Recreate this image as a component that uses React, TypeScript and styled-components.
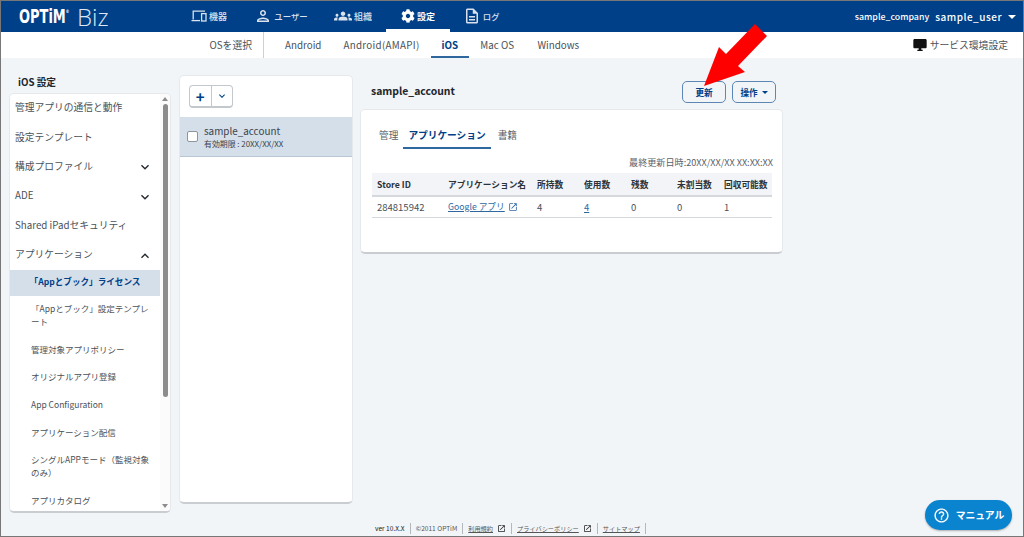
import React from "react";
import styled, { createGlobalStyle } from "styled-components";
import { FaCog } from "react-icons/fa";
import { MdDesktopWindows, MdOpenInNew, MdOutlineDescription, MdOutlineHelpOutline, MdOutlinePerson, MdGroups, MdExpandMore, MdExpandLess } from "react-icons/md";

const FONT = `"Noto Sans CJK JP", "Noto Sans", sans-serif`;
const NAVY = "#004088";

const Global = createGlobalStyle`
  html, body { margin: 0; padding: 0; height: 100%; overflow: hidden; }
  body { font-family: ${FONT}; color: #3c434a; background: #f2f5f8; }
  * { box-sizing: border-box; }
`;

const Page = styled.div`
  position: relative;
  width: 1024px;
  height: 537px;
  border: 1px solid #777;
  display: flex;
  flex-direction: column;
  overflow: hidden;
  background: #f2f5f8;
`;

const Header = styled.header`
  height: 31px;
  background: ${NAVY};
  display: flex;
  align-items: stretch;
  color: #fff;
  flex: none;
`;
const Logo = styled.div`
  width: 175px;
  padding-left: 18px;
  display: flex;
  align-items: center;
  gap: 8px;
`;
const LogoMark = styled.span`
  display: inline-block;
  width: 50px;
  white-space: nowrap;
  font-family: "DejaVu Sans Condensed", "DejaVu Sans", sans-serif;
  font-weight: 700;
  font-size: 19px;
  line-height: 1;
  transform: scaleX(0.76);
  transform-origin: left center;
`;
const LogoReg = styled.sup`
  font-size: 5px;
  vertical-align: 10px;
  line-height: 0;
`;
const LogoBiz = styled.span`
  font-family: "Open Sans", sans-serif;
  font-weight: 300;
  font-size: 24px;
  line-height: 1;
  color: #dfe8f2;
`;
const MainNav = styled.nav`
  display: flex;
  flex: 1;
`;
const NavItem = styled.a<{ $w: number; $active?: boolean; $fs?: number }>`
  position: relative;
  width: ${(p) => p.$w}px;
  display: flex;
  align-items: center;
  justify-content: center;
  gap: 2px;
  font-size: ${(p) => p.$fs ?? 9}px;
  font-weight: ${(p) => (p.$active ? 700 : 500)};
  color: #fff;
  opacity: ${(p) => (p.$active ? 1 : 0.85)};
  padding-bottom: 1px;
  svg { flex: none; }
  &::after {
    content: "";
    display: ${(p) => (p.$active ? "block" : "none")};
    position: absolute;
    left: 0;
    right: 0;
    bottom: 0;
    height: 3px;
    background: #fff;
  }
`;
const UserBox = styled.div`
  display: flex;
  align-items: center;
  gap: 6px;
  padding-right: 7px;
  font-weight: 500;
`;
const Company = styled.span`
  font-size: 8.8px;
`;
const UserName = styled.span`
  font-size: 10px;
  letter-spacing: 0.5px;
`;
const Caret = styled.i<{ $color?: string; $size?: number }>`
  display: inline-block;
  width: 0;
  height: 0;
  border-left: ${(p) => p.$size ?? 4}px solid transparent;
  border-right: ${(p) => p.$size ?? 4}px solid transparent;
  border-top: ${(p) => p.$size ?? 4}px solid ${(p) => p.$color ?? "#fff"};
`;

const SubNav = styled.div`
  height: 26px;
  background: #fff;
  display: flex;
  align-items: stretch;
  font-size: 9.8px;
  flex: none;
`;
const OsLabel = styled.div`
  width: 263px;
  padding-right: 11px;
  display: flex;
  align-items: center;
  justify-content: flex-end;
  border-right: 1px solid #ccd0d4;
  color: #4a5158;
`;
const OsTabs = styled.div`
  display: flex;
  padding-left: 10px;
`;
const OsTab = styled.a<{ $active?: boolean; $ls?: number }>`
  padding: 0 11px;
  display: flex;
  align-items: center;
  color: ${(p) => (p.$active ? NAVY : "#4a5158")};
  font-weight: ${(p) => (p.$active ? 700 : 400)};
  letter-spacing: ${(p) => p.$ls ?? 0}px;
  border-bottom: 2px solid ${(p) => (p.$active ? "#2f689f" : "transparent")};
  border-top: 2px solid transparent;
  &:last-child { margin-left: 1.5px; }
`;
const EnvLink = styled.div`
  margin-left: auto;
  padding-right: 15px;
  display: flex;
  align-items: center;
  gap: 2px;
  color: #4a5158;
  svg { color: #111; }
`;

const Main = styled.main`
  flex: 1;
  min-height: 0;
  display: flex;
  align-items: flex-start;
  padding: 16px 0 0 8px;
`;
const Side = styled.aside`
  width: 162px;
  margin-right: 8px;
  flex: none;
`;
const SideTitle = styled.h2`
  margin: 1px 0 4px 9px;
  font-size: 9.7px;
  font-weight: 700;
  line-height: 14px;
  color: #20262c;
`;
const SideCard = styled.div`
  height: 420px;
  background: #fff;
  border-radius: 5px;
  border: 1px solid #e6e9ec;
  border-bottom: 2px solid #c9cdd1;
  display: flex;
  overflow: hidden;
`;
const SideList = styled.div`
  flex: 1;
  min-width: 0;
  overflow: hidden;
`;
const TopItem = styled.div`
  height: 29.4px;
  padding: 0 7px 3px 5px;
  display: flex;
  align-items: center;
  justify-content: space-between;
  font-size: 9.75px;
  color: #4a5158;
  svg { color: #22282e; flex: none; margin-top: 3px; }
`;
const SubItem = styled.div<{ $active?: boolean }>`
  padding: ${(p) => (p.$active ? "5px 10px 8px 10px" : "5.5px 7px 9.2px 21px")};
  font-size: ${(p) => (p.$active ? 8.6 : 8.5)}px;
  line-height: 13px;
  color: ${(p) => (p.$active ? NAVY : "#4a5158")};
  background: ${(p) => (p.$active ? "#d5dfea" : "transparent")};
  font-weight: ${(p) => (p.$active ? 700 : 400)};
  text-align: ${(p) => (p.$active ? "center" : "left")};
`;
const ScrollTrack = styled.div`
  width: 10px;
  flex: none;
  background: #fbfbfb;
  display: flex;
  flex-direction: column;
  align-items: center;
  padding: 3px 0 3px;
`;
const ScrollThumb = styled.div`
  width: 5px;
  height: 293px;
  margin-top: 3px;
  background: #8c8c8c;
  border-radius: 3px;
`;
const ScrollUp = styled.i`
  width: 0;
  height: 0;
  border-left: 3px solid transparent;
  border-right: 3px solid transparent;
  border-bottom: 4px solid #8c8c8c;
`;
const ScrollDown = styled.i`
  width: 0;
  height: 0;
  margin-top: auto;
  border-left: 3px solid transparent;
  border-right: 3px solid transparent;
  border-top: 4px solid #8c8c8c;
`;

const ListPanel = styled.section`
  width: 174px;
  height: 429px;
  flex: none;
  margin: 1px 7px 0 0;
  background: #fff;
  border-radius: 5px;
  border: 1px solid #e6e9ec;
  border-bottom: 2px solid #c9cdd1;
`;
const ListToolbar = styled.div`
  height: 41px;
  padding: 9px 0 0 9px;
`;
const BtnGroup = styled.div`
  width: 44px;
  height: 23px;
  display: flex;
  border: 1px solid #c3c8cd;
  border-bottom-width: 2px;
  border-radius: 4px;
  color: ${NAVY};
`;
const BtnCell = styled.div`
  flex: 1;
  display: flex;
  align-items: center;
  justify-content: center;
  & + & { border-left: 1px solid #c3c8cd; }
`;
const PlusText = styled.span`
  font-size: 15px;
  font-weight: 700;
  line-height: 1;
`;
const AccountRow = styled.div`
  height: 40px;
  background: #d5dfea;
  border-bottom: 1px solid #b9c6d4;
  display: flex;
  align-items: center;
  padding-left: 7px;
  gap: 6px;
`;
const Check = styled.span`
  width: 11px;
  height: 11px;
  background: #fff;
  border: 1px solid #8d949b;
  border-radius: 2px;
  flex: none;
`;
const AccountName = styled.div`
  font-size: 9.9px;
  line-height: 13px;
  color: #3c434a;
`;
const AccountExp = styled.div`
  font-size: 7.9px;
  line-height: 11px;
  color: #3c434a;
`;

const Detail = styled.section`
  width: 423px;
  flex: none;
  margin-top: 1px;
`;
const DetailHead = styled.div`
  height: 34px;
  padding: 6px 7px 0 11px;
  display: flex;
  align-items: flex-start;
`;
const DetailTitle = styled.h3`
  margin: 3px 0 0;
  font-size: 10.4px;
  font-weight: 700;
  line-height: 14px;
  color: #20262c;
  flex: 1;
`;
const OutlineBtn = styled.button`
  width: 44px;
  height: 22px;
  margin-left: 6px;
  padding: 0;
  border: 1px solid #5b87b2;
  border-radius: 5px;
  background: transparent;
  color: ${NAVY};
  font-family: ${FONT};
  font-size: 8.6px;
  font-weight: 700;
  display: flex;
  align-items: center;
  justify-content: center;
  gap: 4px;
`;
const Card = styled.div`
  height: 145px;
  background: #fff;
  border-radius: 5px;
  border: 1px solid #e6e9ec;
  border-bottom: 2px solid #c9cdd1;
  padding: 12px 9px 0 11px;
`;
const Tabs = styled.div`
  display: flex;
  height: 27px;
`;
const Tab = styled.a<{ $active?: boolean }>`
  padding: 0 5px 0 ${(p) => (p.$active ? 5 : 7)}px;
  display: flex;
  align-items: center;
  font-size: 9.7px;
  color: ${(p) => (p.$active ? NAVY : "#5a6168")};
  font-weight: ${(p) => (p.$active ? 700 : 400)};
  border-bottom: 2px solid ${(p) => (p.$active ? "#2f689f" : "transparent")};
`;
const Updated = styled.div`
  margin-top: 7px;
  height: 12px;
  line-height: 12px;
  text-align: right;
  font-size: 9.1px;
  color: #5a6168;
`;
const Table = styled.table`
  width: 400px;
  margin-top: 5px;
  border-collapse: collapse;
  table-layout: fixed;
  font-size: 8.7px;
`;
const Col = styled.col<{ $w: number }>`
  width: ${(p) => p.$w}px;
`;
const Th = styled.th`
  height: 23px;
  padding: 0 0 0 5px;
  background: #f2f4f7;
  border-bottom: 2px solid #d5d9dd;
  text-align: left;
  font-weight: 700;
  color: #2c3238;
  white-space: nowrap;
`;
const Td = styled.td<{ $wide?: boolean }>`
  height: 21px;
  padding: 0 0 0 5px;
  border-bottom: 1px solid #d5d8dc;
  color: #4a5158;
  white-space: nowrap;
  font-size: ${(p) => (p.$wide ? 9.5 : 8.7)}px;
`;
const TableLink = styled.a`
  color: #2f689f;
  text-decoration: underline;
  svg { vertical-align: -2px; margin-left: 3px; }
`;
const Footer = styled.footer`
  position: absolute;
  left: 374px;
  bottom: 2px;
  display: flex;
  align-items: center;
  font-size: 6.6px;
  line-height: 11px;
  color: #555;
`;
const FootCell = styled.span<{ $dark?: boolean }>`
  padding: 0 5px 0 0;
  margin-right: 5px;
  border-right: 1px solid #b4b8bc;
  display: flex;
  align-items: center;
  gap: 4px;
  color: ${(p) => (p.$dark ? "#222" : "#555")};
  svg { color: #222; }
`;
const FootLink = styled.span`
  font-size: 6.2px;
  text-decoration: underline;
`;
const Manual = styled.div`
  position: absolute;
  left: 924px;
  top: 499px;
  width: 87px;
  height: 30px;
  border-radius: 15px;
  background: #0a84cf;
  color: #fff;
  display: flex;
  align-items: center;
  justify-content: center;
  gap: 6px;
  font-size: 9.8px;
  font-weight: 700;
  box-shadow: 0 1px 2px rgba(0, 0, 0, 0.3);
`;
const Arrow = styled.svg`
  position: absolute;
  left: 700px;
  top: 20px;
  width: 70px;
  height: 70px;
`;

const DevicesIcon = () => (
  <svg width="16" height="12" viewBox="0 0 16 12" fill="none" stroke="#fff">
    <path d="M2.2 9.5V1.2H14" strokeWidth="1.3" />
    <path d="M0.5 10.6H9" strokeWidth="1.3" />
    <rect x="10.6" y="3.6" width="4.4" height="7.4" strokeWidth="1.3" />
  </svg>
);

export default function App() {
  return (
    <Page>
      <Global />
      <Header>
        <Logo>
          <LogoMark>OPTiM<LogoReg>®</LogoReg></LogoMark>
          <LogoBiz>Biz</LogoBiz>
        </Logo>
        <MainNav>
          <NavItem $w={66}><DevicesIcon />機器</NavItem>
          <NavItem $w={78} $fs={8.4}><MdOutlinePerson size={18} />ユーザー</NavItem>
          <NavItem $w={66}><MdGroups size={18} />組織</NavItem>
          <NavItem $w={64} $active><FaCog size={14} />設定</NavItem>
          <NavItem $w={62} $fs={8.4}><MdOutlineDescription size={18} />ログ</NavItem>
        </MainNav>
        <UserBox>
          <Company>sample_company</Company>
          <UserName>sample_user</UserName>
          <Caret />
        </UserBox>
      </Header>
      <SubNav>
        <OsLabel>OSを選択</OsLabel>
        <OsTabs>
          <OsTab>Android</OsTab>
          <OsTab $ls={0.3}>Android(AMAPI)</OsTab>
          <OsTab $active>iOS</OsTab>
          <OsTab>Mac OS</OsTab>
          <OsTab>Windows</OsTab>
        </OsTabs>
        <EnvLink><MdDesktopWindows size={16} />サービス環境設定</EnvLink>
      </SubNav>
      <Main>
        <Side>
          <SideTitle>iOS 設定</SideTitle>
          <SideCard>
            <SideList>
              <TopItem>管理アプリの通信と動作</TopItem>
              <TopItem>設定テンプレート</TopItem>
              <TopItem>構成プロファイル<MdExpandMore size={16} /></TopItem>
              <TopItem>ADE<MdExpandMore size={16} /></TopItem>
              <TopItem>Shared iPadセキュリティ</TopItem>
              <TopItem>アプリケーション<MdExpandLess size={16} /></TopItem>
              <SubItem $active>「Appとブック」ライセンス</SubItem>
              <SubItem>「Appとブック」設定テンプレート</SubItem>
              <SubItem>管理対象アプリポリシー</SubItem>
              <SubItem>オリジナルアプリ登録</SubItem>
              <SubItem>App Configuration</SubItem>
              <SubItem>アプリケーション配信</SubItem>
              <SubItem>シングルAPPモード（監視対象のみ）</SubItem>
              <SubItem>アプリカタログ</SubItem>
            </SideList>
            <ScrollTrack>
              <ScrollUp />
              <ScrollThumb />
              <ScrollDown />
            </ScrollTrack>
          </SideCard>
        </Side>
        <ListPanel>
          <ListToolbar>
            <BtnGroup>
              <BtnCell><PlusText>+</PlusText></BtnCell>
              <BtnCell><MdExpandMore size={12} /></BtnCell>
            </BtnGroup>
          </ListToolbar>
          <AccountRow>
            <Check />
            <div>
              <AccountName>sample_account</AccountName>
              <AccountExp>有効期限 : 20XX/XX/XX</AccountExp>
            </div>
          </AccountRow>
        </ListPanel>
        <Detail>
          <DetailHead>
            <DetailTitle>sample_account</DetailTitle>
            <OutlineBtn>更新</OutlineBtn>
            <OutlineBtn>操作<Caret $color={NAVY} $size={3} /></OutlineBtn>
          </DetailHead>
          <Card>
            <Tabs>
              <Tab>管理</Tab>
              <Tab $active>アプリケーション</Tab>
              <Tab>書籍</Tab>
            </Tabs>
            <Updated>最終更新日時:20XX/XX/XX XX:XX:XX</Updated>
            <Table>
              <colgroup>
                <Col $w={71} /><Col $w={89} /><Col $w={47} /><Col $w={47} /><Col $w={46} /><Col $w={47} /><Col $w={53} />
              </colgroup>
              <thead>
                <tr>
                  <Th>Store ID</Th><Th>アプリケーション名</Th><Th>所持数</Th><Th>使用数</Th><Th>残数</Th><Th>未割当数</Th><Th>回収可能数</Th>
                </tr>
              </thead>
              <tbody>
                <tr>
                  <Td $wide>284815942</Td>
                  <Td><TableLink>Google アプリ<MdOpenInNew size={10} /></TableLink></Td>
                  <Td $wide>4</Td>
                  <Td $wide><TableLink>4</TableLink></Td>
                  <Td $wide>0</Td>
                  <Td $wide>0</Td>
                  <Td $wide>1</Td>
                </tr>
              </tbody>
            </Table>
          </Card>
        </Detail>
      </Main>
      <Footer>
        <FootCell $dark>ver 10.X.X</FootCell>
        <FootCell>©2011 OPTiM</FootCell>
        <FootCell><FootLink>利用規約</FootLink><MdOpenInNew size={9} /></FootCell>
        <FootCell><FootLink>プライバシーポリシー</FootLink><MdOpenInNew size={9} /></FootCell>
        <FootCell><FootLink>サイトマップ</FootLink></FootCell>
      </Footer>
      <Manual><MdOutlineHelpOutline size={17} />マニュアル</Manual>
      <Arrow viewBox="0 0 70 70">
        <polygon fill="#ff0000" points="3,65 18,26 25,33 54,3 66,15 37,45 44,51" />
      </Arrow>
    </Page>
  );
}
